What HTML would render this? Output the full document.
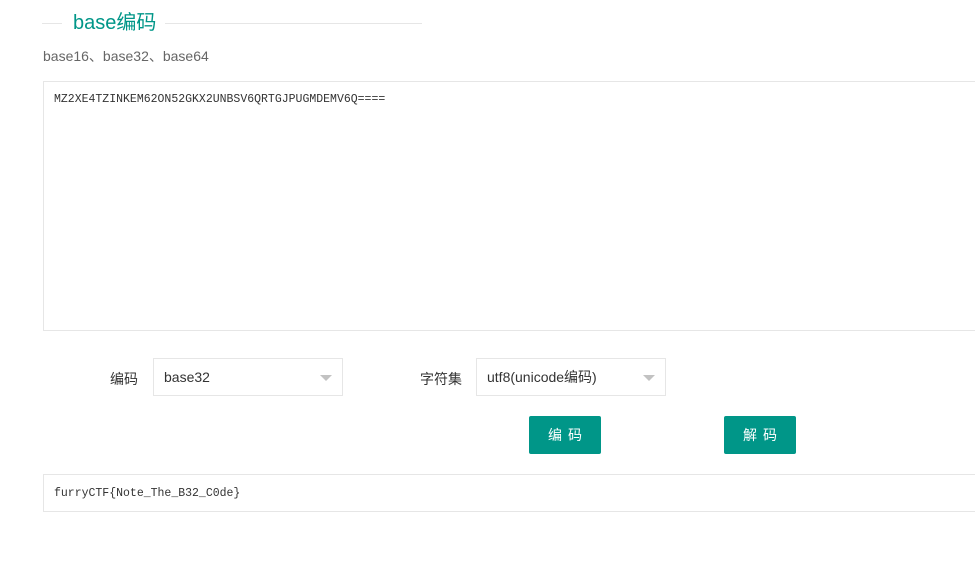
<!DOCTYPE html>
<html><head><meta charset="utf-8"><style>
body{margin:0;width:975px;height:562px;background:#fff;position:relative;overflow:hidden;font-family:"Liberation Sans","Noto Sans CJK SC",sans-serif;}
.a{position:absolute}
.line{position:absolute;height:1px;background:#e6e6e6}
.box{position:absolute;border:1px solid #e6e6e6;box-sizing:border-box;background:#fff}
.mono{font-family:"Liberation Mono","Noto Sans CJK SC",monospace;font-size:11.5px;color:#333}
.sel{position:absolute;border:1px solid #e6e6e6;box-sizing:border-box;height:38px;font-size:14px;color:#333;line-height:36px;padding-left:10px}
.tri{position:absolute;right:10px;top:16px;width:0;height:0;border-left:6px solid transparent;border-right:6px solid transparent;border-top:6px solid #c2c2c2}
.btn{position:absolute;background:#009688;color:#fff;font-size:14px;text-align:center;line-height:38px;width:72px;height:38px;border-radius:2px;letter-spacing:6px;text-indent:6px}
.lbl{position:absolute;font-size:14px;color:#333}
</style></head><body>
<div class="line" style="left:42px;top:23px;width:20px"></div>
<div class="a" style="left:73px;top:10px;font-size:20px;color:#009688;line-height:26px">base编码</div>
<div class="line" style="left:165px;top:23px;width:257px"></div>
<div class="a" style="left:43px;top:47px;font-size:14px;color:#666;line-height:18px">base16、base32、base64</div>
<div class="box" style="left:43px;top:81px;width:940px;height:250px"></div>
<div class="a mono" style="left:54px;top:93px">MZ2XE4TZINKEM62ON52GKX2UNBSV6QRTGJPUGMDEMV6Q====</div>
<div class="lbl" style="left:110px;top:369px">编码</div>
<div class="sel" style="left:153px;top:358px;width:190px">base32<div class="tri"></div></div>
<div class="lbl" style="left:420px;top:369px">字符集</div>
<div class="sel" style="left:476px;top:358px;width:190px">utf8(unicode编码)<div class="tri"></div></div>
<div class="btn" style="left:529px;top:416px">编码</div>
<div class="btn" style="left:724px;top:416px">解码</div>
<div class="box" style="left:43px;top:474px;width:940px;height:38px"></div>
<div class="a mono" style="left:54px;top:487px">furryCTF{Note_The_B32_C0de}</div>
</body></html>
